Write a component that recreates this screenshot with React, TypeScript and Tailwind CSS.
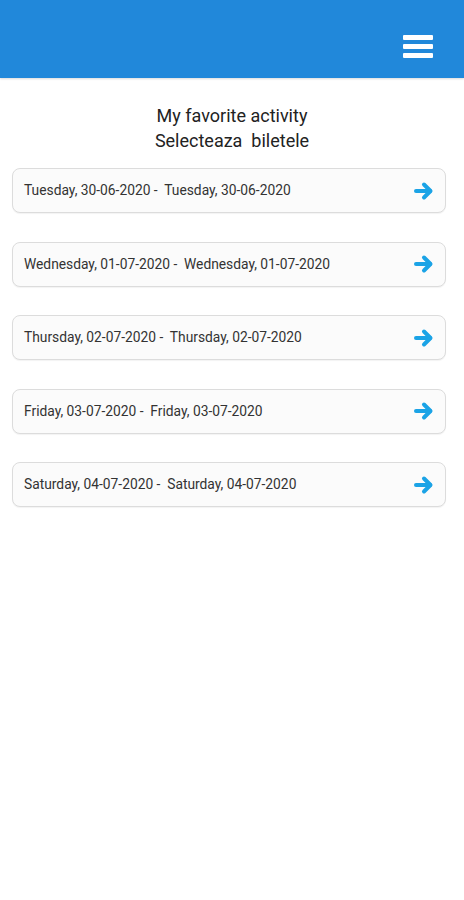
import React from "react";

const rows = [
  "Tuesday, 30-06-2020 -  Tuesday, 30-06-2020",
  "Wednesday, 01-07-2020 -  Wednesday, 01-07-2020",
  "Thursday, 02-07-2020 -  Thursday, 02-07-2020",
  "Friday, 03-07-2020 -  Friday, 03-07-2020",
  "Saturday, 04-07-2020 -  Saturday, 04-07-2020",
];

function Arrow() {
  return (
    <svg width="20" height="20" viewBox="0 0 20 20" fill="none">
      <path d="M2 10H16" stroke="#1ba3e6" strokeWidth="4" strokeLinecap="round" />
      <path d="M10 3.5L16.5 10L10 16.5" stroke="#1ba3e6" strokeWidth="4" strokeLinecap="round" strokeLinejoin="round" />
    </svg>
  );
}

export default function App() {
  return (
    <div className="w-[464px] min-h-[900px] bg-white" style={{ fontFamily: "Roboto, 'Liberation Sans', sans-serif" }}>
      <div className="h-[78px] bg-[#2188da] flex items-center justify-end pr-[31px] pt-[15px] shadow-[0_1px_2px_rgba(0,0,0,0.15)]">
        <div className="flex flex-col gap-[4px] w-[30px]">
          <div className="h-[5px] bg-white rounded-[1px]" />
          <div className="h-[5px] bg-white rounded-[1px]" />
          <div className="h-[5px] bg-white rounded-[1px]" />
        </div>
      </div>
      <div className="pt-[25px] text-center text-[18px] leading-[25px] text-[#222]">
        <div>My favorite activity</div>
        <div>Selecteaza&nbsp; biletele</div>
      </div>
      <div className="mt-[15px] pl-[12px] pr-[18px] flex flex-col gap-[28.5px]">
        {rows.map((r) => (
          <div
            key={r}
            className="h-[45px] rounded-[8px] border border-[#dcdcdc] bg-[#fbfbfb] flex items-center justify-between pl-[11px] pr-[11px] shadow-[0_1px_1px_rgba(0,0,0,0.05)]"
          >
            <span className="text-[13.8px] text-[#333] whitespace-pre">{r}</span>
            <Arrow />
          </div>
        ))}
      </div>
    </div>
  );
}
